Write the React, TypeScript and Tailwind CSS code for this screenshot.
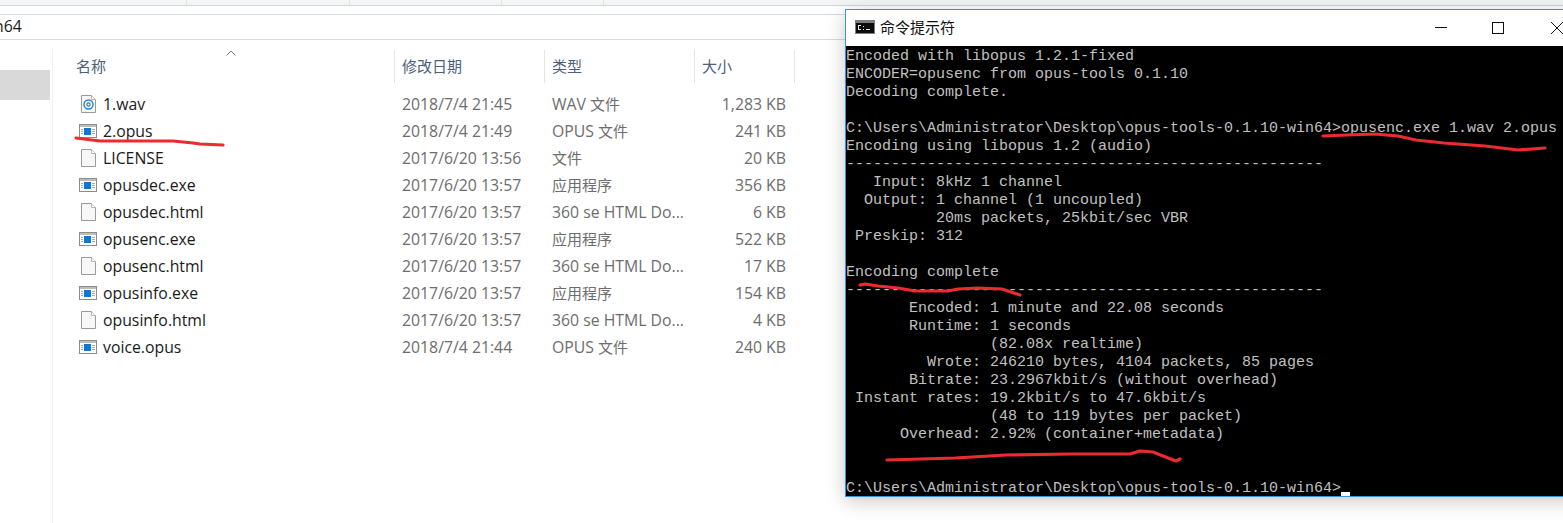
const rows: [string, string, string, string, "wav" | "exe" | "doc"][] = [
  ["1.wav", "2018/7/4 21:45", "WAV 文件", "1,283 KB", "wav"],
  ["2.opus", "2018/7/4 21:49", "OPUS 文件", "241 KB", "exe"],
  ["LICENSE", "2017/6/20 13:56", "文件", "20 KB", "doc"],
  ["opusdec.exe", "2017/6/20 13:57", "应用程序", "356 KB", "exe"],
  ["opusdec.html", "2017/6/20 13:57", "360 se HTML Do...", "6 KB", "doc"],
  ["opusenc.exe", "2017/6/20 13:57", "应用程序", "522 KB", "exe"],
  ["opusenc.html", "2017/6/20 13:57", "360 se HTML Do...", "17 KB", "doc"],
  ["opusinfo.exe", "2017/6/20 13:57", "应用程序", "154 KB", "exe"],
  ["opusinfo.html", "2017/6/20 13:57", "360 se HTML Do...", "4 KB", "doc"],
  ["voice.opus", "2018/7/4 21:44", "OPUS 文件", "240 KB", "exe"],
];

const term = `Encoded with libopus 1.2.1-fixed
ENCODER=opusenc from opus-tools 0.1.10
Decoding complete.

C:\\Users\\Administrator\\Desktop\\opus-tools-0.1.10-win64>opusenc.exe 1.wav 2.opus
Encoding using libopus 1.2 (audio)
-----------------------------------------------------
   Input: 8kHz 1 channel
  Output: 1 channel (1 uncoupled)
          20ms packets, 25kbit/sec VBR
 Preskip: 312

Encoding complete
-----------------------------------------------------
       Encoded: 1 minute and 22.08 seconds
       Runtime: 1 seconds
                (82.08x realtime)
         Wrote: 246210 bytes, 4104 packets, 85 pages
       Bitrate: 23.2967kbit/s (without overhead)
 Instant rates: 19.2kbit/s to 47.6kbit/s
                (48 to 119 bytes per packet)
      Overhead: 2.92% (container+metadata)


C:\\Users\\Administrator\\Desktop\\opus-tools-0.1.10-win64>`;

function FileIcon({ kind }: { kind: "wav" | "exe" | "doc" }) {
  if (kind === "exe")
    return (
      <svg width="18" height="14" viewBox="0 0 18 14">
        <rect x="0.5" y="0.5" width="17" height="13" fill="#fff" stroke="#8c8c8c" />
        <rect x="1" y="1" width="16" height="2" fill="#bdbdbd" />
        <rect x="5" y="4" width="7" height="7" fill="#0a78d7" />
        <path d="M2 5.5h2M2 7.5h2M2 9.5h2M13 5.5h3M13 7.5h3M13 9.5h3" stroke="#a9a9a9" />
      </svg>
    );
  return (
    <svg width="15" height="18" viewBox="0 0 15 18">
      <path d="M0.5 0.5H10.5L14.5 4.5V17.5H0.5Z" fill="#f7f7f7" stroke="#9a9a9a" />
      <path d="M10.5 0.5V4.5H14.5" fill="#fff" stroke="#b5b5b5" />
      {kind === "wav" && (
        <g fill="none" stroke="#1f86d8">
          <circle cx="7.5" cy="9.5" r="4.5" strokeWidth="1.4" />
          <circle cx="7.5" cy="9.5" r="1.6" strokeWidth="1.2" />
        </g>
      )}
    </svg>
  );
}

function Mixed({ text }: { text: string }) {
  const m = text.match(/^(.*?)([\u4e00-\u9fff]+)$/);
  if (!m) return <>{text}</>;
  return (
    <>
      {m[1]}
      <span className="text-[15px]">{m[2]}</span>
    </>
  );
}

const uiFont = "font-['Open_Sans','Noto_Sans_CJK_SC',sans-serif]";

export default function App() {
  return (
    <div className={`relative w-[1563px] h-[523px] overflow-hidden bg-white ${uiFont}`}>
      {/* ribbon strip */}
      <div className="h-[6px] bg-[#f4f5f7] border-b border-[#d4d4d4] flex">
        <div className="w-[187px] border-r border-[#e2e2e2]" />
        <div className="w-[163px] border-r border-[#e2e2e2]" />
        <div className="w-[152px] border-r border-[#e2e2e2]" />
        <div className="w-[102px] border-r border-[#e2e2e2]" />
      </div>
      {/* address bar */}
      <div className="mt-[8px] h-[26px] border-y border-[#d9d9d9] flex items-center text-[15.8px] leading-[22px] pb-[2px] text-[#1a1a1a] overflow-hidden">
        <span className="ml-[-6px]">n64</span>
      </div>
      <div className="flex h-[483px]">
        <div className="w-[53px] shrink-0 border-r border-[#f0f0f0] pt-[20px] mt-[10px]">
          <div className="w-[50px] h-[30px] bg-[#d9d9d9]" />
        </div>
        <div className="flex-1 relative">
          {/* sort caret */}
          <svg width="10" height="6" viewBox="0 0 10 6" className="absolute left-[173px] top-[10px]" fill="none" stroke="#7a7a7a">
            <path d="M0.5 5.5L5 1L9.5 5.5" />
          </svg>
          {/* column header */}
          <div className="flex h-[33px] mt-[10px] text-[15px] text-[#4c607a]">
            <div className="w-[342px] pl-[23px] flex items-center border-r border-[#e5e5e5]">名称</div>
            <div className="w-[150px] pl-[7px] flex items-center border-r border-[#e5e5e5]">修改日期</div>
            <div className="w-[150px] pl-[7px] flex items-center border-r border-[#e5e5e5]">类型</div>
            <div className="w-[100px] pl-[7px] flex items-center border-r border-[#e5e5e5]">大小</div>
          </div>
          {/* rows */}
          <div className="mt-[7px] text-[15.8px] leading-[22px]">
            {rows.map(([name, date, type, size, kind]) => (
              <div key={name} className="flex h-[27px] items-center whitespace-nowrap">
                <div className="w-[342px] flex items-center">
                  <div className="w-[50px] flex justify-end pr-[6px]">
                    <div className="w-[18px] flex justify-center">
                      <FileIcon kind={kind} />
                    </div>
                  </div>
                  <span className="text-[#1a1a1a]">{name}</span>
                </div>
                <div className="w-[150px] pl-[7px] text-[#6d6d6d]">{date}</div>
                <div className="w-[150px] pl-[7px] text-[#6d6d6d]"><Mixed text={type} /></div>
                <div className="w-[100px] pr-[9px] text-right text-[#6d6d6d]">{size}</div>
              </div>
            ))}
          </div>
        </div>
      </div>

      {/* console window */}
      <div className="absolute left-[845px] top-[9px] w-[740px] h-[488px] border border-[#3f8fdc] bg-white shadow-[0_4px_18px_rgba(0,0,0,0.22)] flex flex-col">
        <div className="h-[36px] shrink-0 flex items-center pl-[9px] pb-[2px] text-[15px] text-[#111]">
          <svg width="20" height="14" viewBox="0 0 20 14" className="mr-[5px]">
            <rect width="20" height="14" fill="#7f7f7f" />
            <rect x="1" y="3" width="18" height="10" fill="#0c0c0c" />
            <path d="M3 5H6V6H4V9H6V10H3ZM8 6H9V7H8ZM8 9H9V10H8ZM11 9H15V10H11Z" fill="#e8e8e8" />
          </svg>
          命令提示符
          <svg width="12" height="12" viewBox="0 0 12 12" className="absolute left-[589px] top-[12px]" fill="none" stroke="#111">
            <path d="M0 5.5H12" />
          </svg>
          <svg width="12" height="12" viewBox="0 0 12 12" className="absolute left-[646px] top-[12px]" fill="none" stroke="#111">
            <rect x="0.5" y="0.5" width="11" height="11" />
          </svg>
          <svg width="12" height="12" viewBox="0 0 12 12" className="absolute left-[705px] top-[12px]" fill="none" stroke="#111">
            <path d="M0 0L12 12M12 0L0 12" />
          </svg>
        </div>
        <div className="relative flex-1 bg-black pt-[2px] text-[#c0c0c0] font-['Liberation_Mono',monospace] text-[15px] leading-[18px] whitespace-pre overflow-hidden">
          {term}
          <span className="absolute left-[495px] top-[446px] w-[9px] h-[4px] bg-white" />
        </div>
      </div>

      {/* red pen annotations */}
      <svg className="absolute inset-0 pointer-events-none" width="1563" height="523" fill="none" stroke="#ee2a31" strokeWidth="3.2" strokeLinecap="round" strokeLinejoin="round">
        <path d="M76 138L100 141L133 141L173 141L193 143L200 144L223 145" />
        <path d="M1323 136L1347 135L1375 134L1398 136L1416 140L1444 143L1485 146L1518 150L1545 148" />
        <path d="M860 285L865 284L878 286L898 288L915 291L948 291L958 289L978 288L1002 289L1020 295" />
        <path d="M887 460L955 458L1006 455L1070 454L1130 454L1140 451L1153 452L1163 456L1176 461L1180 459" />
      </svg>
    </div>
  );
}
